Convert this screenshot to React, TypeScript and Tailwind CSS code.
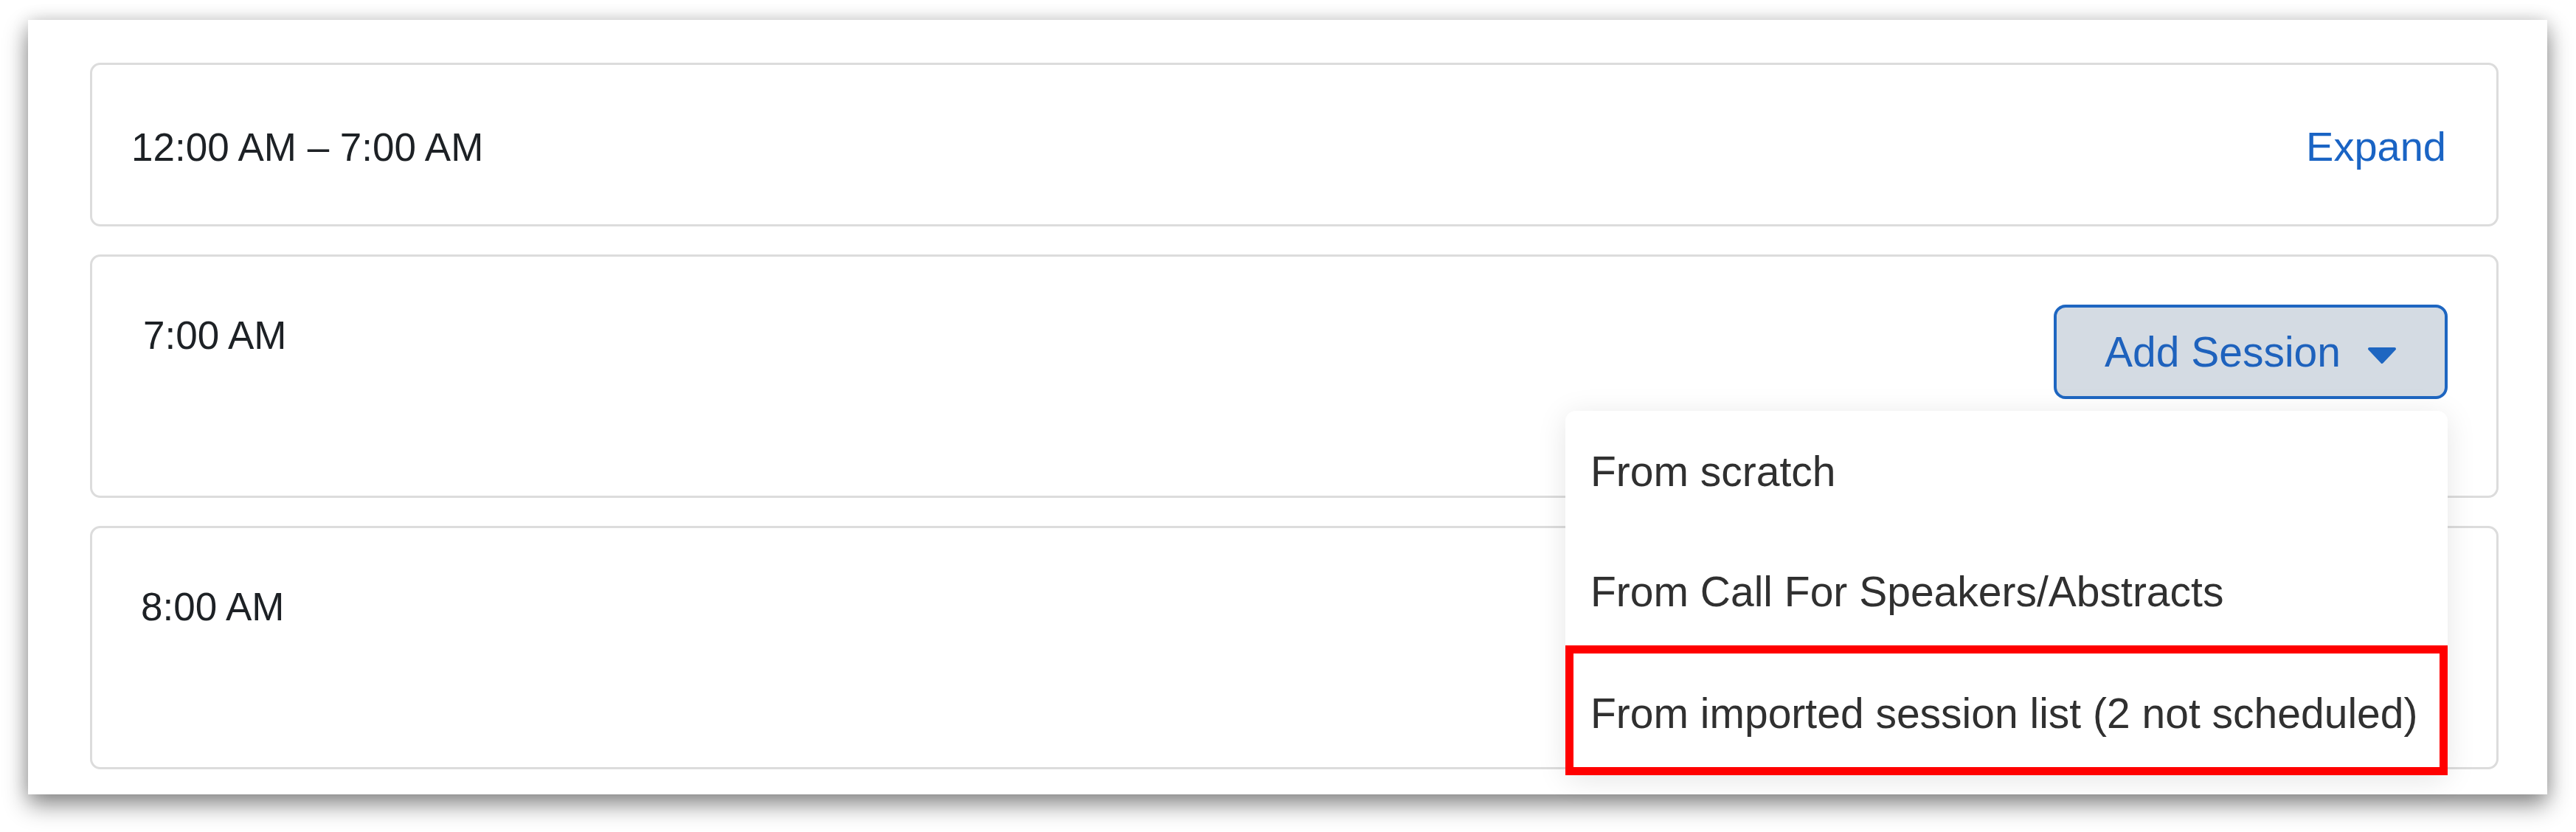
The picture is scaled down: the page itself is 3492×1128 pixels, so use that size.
import { ReactNode } from "react"

const font = { fontFamily: '"Liberation Sans", Arial, Helvetica, sans-serif' }

const Caret = () => (
  <svg width="40" height="24" viewBox="0 0 40 24" className="mt-[10px] shrink-0">
    <path d="M3 3 H37 L20 21 Z" fill="#1e66c1" stroke="#1e66c1" strokeWidth="4" strokeLinejoin="round" />
  </svg>
)

const AddSessionButton = () => (
  <button className="flex h-[128px] shrink-0 items-center whitespace-nowrap rounded-[16px] border-[4px] border-[#1e66c1] bg-[#d4dbe3] px-[65px]">
    <span className="text-[57px] leading-none text-[#1e62bd]">Add Session</span>
    <span className="ml-[36px]">
      <Caret />
    </span>
  </button>
)

const Card = ({ className, children }: { className: string; children: ReactNode }) => (
  <div className={`rounded-[14px] border-[3px] border-[#dcdcdc] bg-white ${className}`}>{children}</div>
)

const menuItems = ["From scratch", "From Call For Speakers/Abstracts"]

const SessionMenu = () => (
  <div className="absolute right-[66px] top-[209px] z-10 flex w-[1196px] flex-col rounded-[14px] bg-white shadow-[0_6px_40px_rgba(0,0,0,0.10)]">
    <div className="flex h-[164px] items-center pl-[34px] text-[57px] leading-none text-[#303030]">{menuItems[0]}</div>
    <div className="flex h-[162px] items-center pl-[34px] text-[57px] leading-none text-[#303030]">{menuItems[1]}</div>
    <div className="relative flex h-[168px] items-center whitespace-nowrap pl-[34px] text-[57px] leading-none text-[#303030]">
      {/* highlight annotation */}
      <div className="pointer-events-none absolute inset-x-0 -top-[8px] bottom-0 border-[11px] border-[#ff0000]" />
      From imported session list (2 not scheduled)
    </div>
  </div>
)

export default function App() {
  return (
    <div className="h-[1128px] w-[3492px] bg-white pl-[38px] pt-[27px]" style={font}>
      <div className="flex h-[1050px] w-[3415px] flex-col gap-[38px] bg-white pb-[34px] pl-[84px] pr-[66px] pt-[58px] shadow-[0_14px_30px_rgba(0,0,0,0.45),0_0_22px_rgba(0,0,0,0.12)]">
        <Card className="flex h-[222px] items-center justify-between pl-[53px] pr-[68px] pt-[6px]">
          <span className="text-[53px] leading-none text-[#1d2125]">12:00 AM – 7:00 AM</span>
          <a className="text-[56px] leading-none text-[#1a64c4]">Expand</a>
        </Card>
        <Card className="relative flex h-[330px] items-start justify-between pl-[69px] pr-[66px] pt-[65px]">
          <span className="mt-[15px] text-[53px] leading-none text-[#1d2125]">7:00 AM</span>
          <AddSessionButton />
          <SessionMenu />
        </Card>
        <Card className="flex h-[330px] items-start pl-[66px] pr-[66px] pt-[65px]">
          <span className="mt-[15px] text-[53px] leading-none text-[#1d2125]">8:00 AM</span>
        </Card>
      </div>
    </div>
  )
}
